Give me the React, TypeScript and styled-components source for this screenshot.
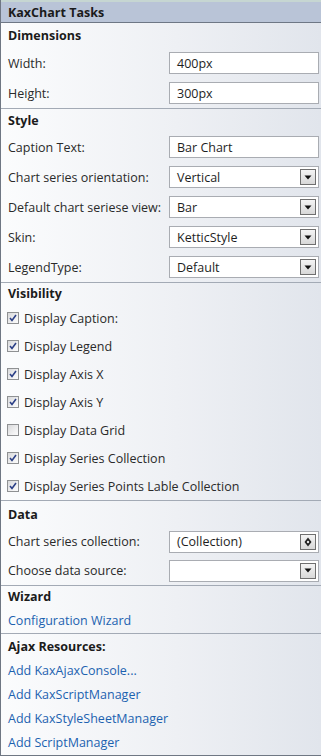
import React from "react";
import styled, { createGlobalStyle } from "styled-components";

const Global = createGlobalStyle`
  html, body { margin: 0; padding: 0; background: #ffffff; }
  body { font-family: "Open Sans", "Noto Sans", sans-serif; }
`;

const Panel = styled.div`
  width: 321px;
  height: 756px;
  box-sizing: border-box;
  border-left: 1px solid #6f7783;
  border-bottom: 1px solid #6f7783;
  background: linear-gradient(to right, #fbfcfd 0%, #eef0f4 55%, #e1e5ec 100%);
  display: flex;
  flex-direction: column;
  font-size: 12.5px;
  color: #1e1e1e;
  overflow: hidden;
`;

const Header = styled.div`
  height: 23px;
  flex-shrink: 0;
  box-sizing: border-box;
  border-top: 2px solid #c6d6d2;
  border-bottom: 1px solid #6e7785;
  background: #b9c4d7;
  display: flex;
  align-items: center;
  padding-left: 7px;
  font-weight: 700;
  color: #1b1b1b;
`;

const Section = styled.div<{ $last?: boolean }>`
  display: flex;
  flex-direction: column;
  flex-shrink: 0;
  border-bottom: ${(p) => (p.$last ? "none" : "1px solid #a3aab5")};
`;

const Title = styled.div<{ $h: number }>`
  height: ${(p) => p.$h}px;
  display: flex;
  align-items: center;
  padding-left: 7px;
  font-weight: 700;
  color: #1b1b1b;
`;

const Row = styled.div<{ $h: number }>`
  height: ${(p) => p.$h}px;
  display: flex;
  align-items: center;
  padding-left: 7px;
  padding-right: 2px;
`;

const Label = styled.span`
  flex: 1;
  color: #2a2a2a;
  white-space: nowrap;
`;

const Field = styled.div`
  width: 150px;
  height: 22px;
  box-sizing: border-box;
  border: 1px solid #a9acb2;
  background: #ffffff;
  display: flex;
  align-items: center;
  padding-left: 7px;
  padding-right: 2px;
  color: #1e1e1e;
`;

const FieldText = styled.span`
  flex: 1;
  white-space: nowrap;
`;

const DropButton = styled.div`
  width: 16px;
  height: 16px;
  box-sizing: border-box;
  border: 1px solid #6f6f6f;
  background: linear-gradient(to bottom, #f4f4f4, #d8d8d8);
  display: flex;
  align-items: center;
  justify-content: center;
`;

const CheckRow = styled.div<{ $h: number }>`
  height: ${(p) => p.$h}px;
  display: flex;
  align-items: center;
  gap: 5px;
  padding-left: 6px;
  color: #2a2a2a;
`;

const Box = styled.div`
  width: 12px;
  height: 12px;
  box-sizing: border-box;
  border: 1px solid #8f9193;
  background: linear-gradient(135deg, #d8d9db 0%, #f3f3f4 70%, #fbfbfb 100%);
  display: flex;
  align-items: center;
  justify-content: center;
`;

const LinkRow = styled.div<{ $h: number }>`
  height: ${(p) => p.$h}px;
  display: flex;
  align-items: center;
  padding-left: 7px;
  color: #1c62b0;
`;

const Arrow = () => (
  <svg width="8" height="5" viewBox="0 0 8 5">
    <path d="M0.5 0.5 L7.5 0.5 L4 4.5 Z" fill="#111" />
  </svg>
);

const UpDown = () => (
  <svg width="8" height="10" viewBox="0 0 8 10">
    <path d="M4 0.5 L7.5 5 L4 9.5 L0.5 5 Z" fill="#222" />
    <circle cx="4" cy="5" r="1.2" fill="#e8e8e8" />
  </svg>
);

const Check = () => (
  <svg width="10" height="10" viewBox="0 0 10 10">
    <path d="M2 5 L4 7.5 L8 2" stroke="#2b3f86" strokeWidth="1.6" fill="none" />
  </svg>
);

type FieldKind = "text" | "drop" | "coll";

const FieldRow = ({ label, value, kind, h = 30 }: { label: string; value: string; kind: FieldKind; h?: number }) => (
  <Row $h={h}>
    <Label>{label}</Label>
    <Field>
      <FieldText>{value}</FieldText>
      {kind === "drop" && (
        <DropButton>
          <Arrow />
        </DropButton>
      )}
      {kind === "coll" && (
        <DropButton>
          <UpDown />
        </DropButton>
      )}
    </Field>
  </Row>
);

const checks: [string, boolean][] = [
  ["Display Caption:", true],
  ["Display Legend", true],
  ["Display Axis X", true],
  ["Display Axis Y", true],
  ["Display Data Grid", false],
  ["Display Series Collection", true],
  ["Display Series Points Lable Collection", true],
];

const ajax = ["Add KaxAjaxConsole...", "Add KaxScriptManager", "Add KaxStyleSheetManager", "Add ScriptManager"];

export default function App() {
  return (
    <>
      <Global />
      <Panel>
        <Header>KaxChart Tasks</Header>
        <Section>
          <Title $h={25}>Dimensions</Title>
          <FieldRow label="Width:" value="400px" kind="text" />
          <FieldRow label="Height:" value="300px" kind="text" />
        </Section>
        <Section>
          <Title $h={23}>Style</Title>
          <FieldRow label="Caption Text:" value="Bar Chart" kind="text" />
          <FieldRow label="Chart series orientation:" value="Vertical" kind="drop" />
          <FieldRow label="Default chart seriese view:" value="Bar" kind="drop" />
          <FieldRow label="Skin:" value="KetticStyle" kind="drop" />
          <FieldRow label="LegendType:" value="Default" kind="drop" />
        </Section>
        <Section>
          <Title $h={21}>Visibility</Title>
          {checks.map(([t, c]) => (
            <CheckRow key={t} $h={28}>
              <Box>{c && <Check />}</Box>
              <span>{t}</span>
            </CheckRow>
          ))}
        </Section>
        <Section>
          <Title $h={26}>Data</Title>
          <FieldRow label="Chart series collection:" value="(Collection)" kind="coll" h={29} />
          <FieldRow label="Choose data source:" value="" kind="drop" h={29} />
        </Section>
        <Section>
          <Title $h={21}>Wizard</Title>
          <LinkRow $h={26}>Configuration Wizard</LinkRow>
        </Section>
        <Section $last>
          <Title $h={24}>Ajax Resources:</Title>
          {ajax.map((a) => (
            <LinkRow key={a} $h={24}>
              {a}
            </LinkRow>
          ))}
        </Section>
      </Panel>
    </>
  );
}
